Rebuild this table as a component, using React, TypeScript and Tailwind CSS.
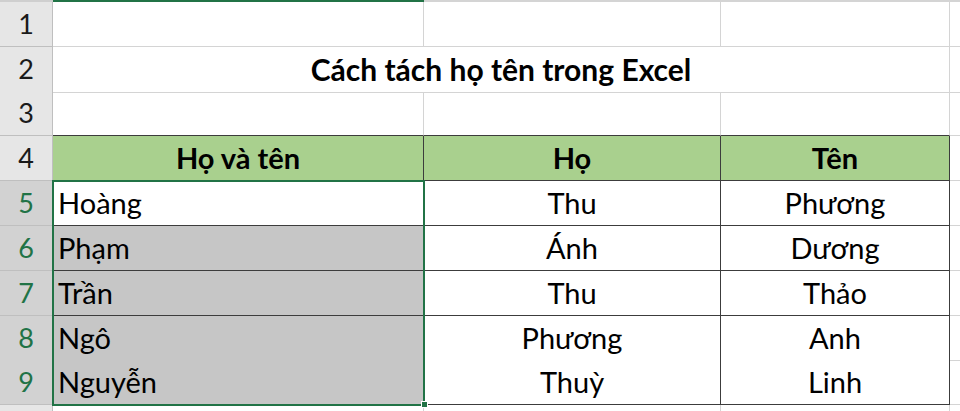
import React from 'react';

const GRID = 'border-[#d4d4d4]';
const DARK = 'border-[#3c3c3c]';

type Row = {
  n: number;
  h: string;
  kind: 'blank' | 'title' | 'head' | 'data';
  cells?: [string, string, string];
};

const rows: Row[] = [
  { n: 1, h: 'h-[45px]', kind: 'blank' },
  { n: 2, h: 'h-[45px]', kind: 'title' },
  { n: 3, h: 'h-[44px]', kind: 'blank' },
  { n: 4, h: 'h-[45px]', kind: 'head', cells: ['Họ và tên', 'Họ', 'Tên'] },
  { n: 5, h: 'h-[45px]', kind: 'data', cells: ['Hoàng', 'Thu', 'Phương'] },
  { n: 6, h: 'h-[45px]', kind: 'data', cells: ['Phạm', 'Ánh', 'Dương'] },
  { n: 7, h: 'h-[45px]', kind: 'data', cells: ['Trần', 'Thu', 'Thảo'] },
  { n: 8, h: 'h-[44px]', kind: 'data', cells: ['Ngô', 'Phương', 'Anh'] },
  { n: 9, h: 'h-[45px]', kind: 'data', cells: ['Nguyễn', 'Thuỳ', 'Linh'] },
];

const RowHeader = ({ n, selected }: { n: number; selected: boolean }) => (
  <div
    className={`flex items-center justify-center border-r border-b border-[#bfbfbf] text-[27px] ${
      selected ? 'bg-[#d2d2d2] text-[#217346]' : 'bg-[#e6e6e6] text-[#1a1a1a]'
    }`}
  >
    {n}
  </div>
);

export default function App() {
  return (
    <div
      className="relative h-[411px] w-[960px] overflow-hidden bg-white text-black"
      style={{ fontFamily: 'Lato, "Open Sans", sans-serif' }}
    >
      {/* column header bottom edge */}
      <div className="grid h-[2px] grid-cols-[53px_371px_297px_229px_1fr]">
        <div className="bg-[#cfcfcf]" />
        <div className="bg-[#217346]" />
        <div className="bg-[#d4d4d4]" />
        <div className="bg-[#d4d4d4]" />
        <div className="bg-[#d4d4d4]" />
      </div>

      {rows.map((r) => {
        const selected = r.kind === 'data';
        return (
          <div key={r.n} className={`grid grid-cols-[53px_371px_297px_229px_1fr] ${r.h}`}>
            <RowHeader n={r.n} selected={selected} />
            {r.kind === 'title' && (
              <div className={`col-span-3 flex items-center justify-center border-r border-b ${GRID} text-[30px] font-bold`}>
                Cách tách họ tên trong Excel
              </div>
            )}
            {r.kind === 'blank' &&
              [0, 1, 2].map((i) => (
                <div
                  key={i}
                  className={`border-r border-b ${GRID} ${r.n === 3 ? 'border-b-[#3c3c3c]' : ''}`}
                />
              ))}
            {r.kind === 'head' &&
              r.cells!.map((c, i) => (
                <div
                  key={i}
                  className={`flex items-center justify-center border-r border-b ${DARK} bg-[#a9d08e] text-[29px] font-bold`}
                >
                  {c}
                </div>
              ))}
            {r.kind === 'data' &&
              r.cells!.map((c, i) => (
                <div
                  key={i}
                  className={`flex items-center border-r border-b ${DARK} text-[29px] ${
                    i === 0 ? 'justify-start pl-[5px]' : 'justify-center'
                  } ${i === 0 && r.n > 5 ? 'bg-[#c6c6c6]' : 'bg-white'}`}
                >
                  {c}
                </div>
              ))}
            <div className={`border-b ${GRID}`} />
          </div>
        );
      })}

      <div className="grid h-[20px] grid-cols-[53px_371px_297px_229px_1fr]">
        <div className="border-r border-[#bfbfbf] bg-[#e6e6e6]" />
        <div className={`border-r ${GRID}`} />
        <div className={`border-r ${GRID}`} />
        <div className={`border-r ${GRID}`} />
        <div />
      </div>

      {/* selection outline A5:A9 */}
      <div className="pointer-events-none absolute left-[52px] top-[180px] h-[226px] w-[373px] border-2 border-[#217346]" />
      <div className="pointer-events-none absolute left-[421px] top-[401px] h-[7px] w-[7px] border border-white bg-[#217346]" />
    </div>
  );
}
